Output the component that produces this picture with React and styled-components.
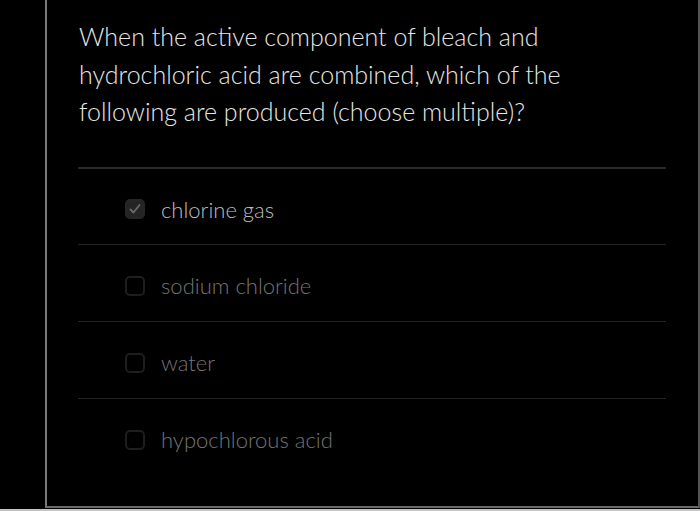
import React from 'react';
import styled, { createGlobalStyle } from 'styled-components';

const GlobalStyle = createGlobalStyle`
    html, body {
        margin: 0;
        padding: 0;
        background: #c4c4c4;
    }
    #root {
        height: 511px;
    }
`

const options = [
    { label: 'chlorine gas', checked: true },
    { label: 'sodium chloride', checked: false },
    { label: 'water', checked: false },
    { label: 'hypochlorous acid', checked: false },
];

const App = () => {
    return (
        <>
            <GlobalStyle />
            <Screen>
                <Panel>
                    <Question>
                        When the active component of bleach and hydrochloric acid are combined, which of the following are produced (choose multiple)?
                    </Question>
                    <OptionList>
                        {options.map((opt) => (
                            <OptionRow key={opt.label}>
                                <Box checked={opt.checked}>
                                    {opt.checked && (
                                        <svg width="14" height="14" viewBox="0 0 14 14">
                                            <path d="M2.5 7.5 L5.5 10.5 L11.5 3" fill="none" stroke="#6a6a6a" strokeWidth="1.8" strokeLinecap="round" strokeLinejoin="round" />
                                        </svg>
                                    )}
                                </Box>
                                <Label checked={opt.checked}>{opt.label}</Label>
                            </OptionRow>
                        ))}
                    </OptionList>
                </Panel>
            </Screen>
        </>
    )
}

const Screen = styled.div`
    background: #000;
    height: 509px;
    padding-left: 45px;
    box-sizing: border-box;
    display: flex;
`
const Panel = styled.div`
    flex: 1;
    height: 508px;
    box-sizing: border-box;
    border-left: 2px solid #7a7a7a;
    border-right: 2px solid #555;
    border-bottom: 2px solid #6a6a6a;
    padding: 18px 32px 0 31px;
    display: flex;
    flex-direction: column;
`
const Question = styled.p`
    margin: 0 0 0 1px;
    font-family: Lato, "Open Sans", sans-serif;
    font-weight: 300;
    font-size: 25px;
    line-height: 37.5px;
    color: #e6e6e6;
    max-width: 520px;
`
const OptionList = styled.div`
    margin-top: 36px;
    border-top: 2px solid #2a2a2a;
`
const OptionRow = styled.div`
    display: flex;
    align-items: center;
    height: 75px;
    padding: 6px 0 0 47px;
    box-sizing: border-box;
    gap: 16px;
    & + & {
        border-top: 1px solid #232323;
        height: 77px;
    }
`
const Box = styled.div`
    width: 20px;
    height: 20px;
    box-sizing: border-box;
    border-radius: 5px;
    border: 2px solid ${props => props.checked ? '#262626' : '#1e1e1e'};
    background: ${props => props.checked ? '#242424' : 'transparent'};
    display: flex;
    align-items: center;
    justify-content: center;
`
const Label = styled.span`
    font-family: Lato, "Open Sans", sans-serif;
    font-weight: 300;
    font-size: 22px;
    color: ${props => props.checked ? '#bdbdbd' : '#747474'};
`

export default App;
